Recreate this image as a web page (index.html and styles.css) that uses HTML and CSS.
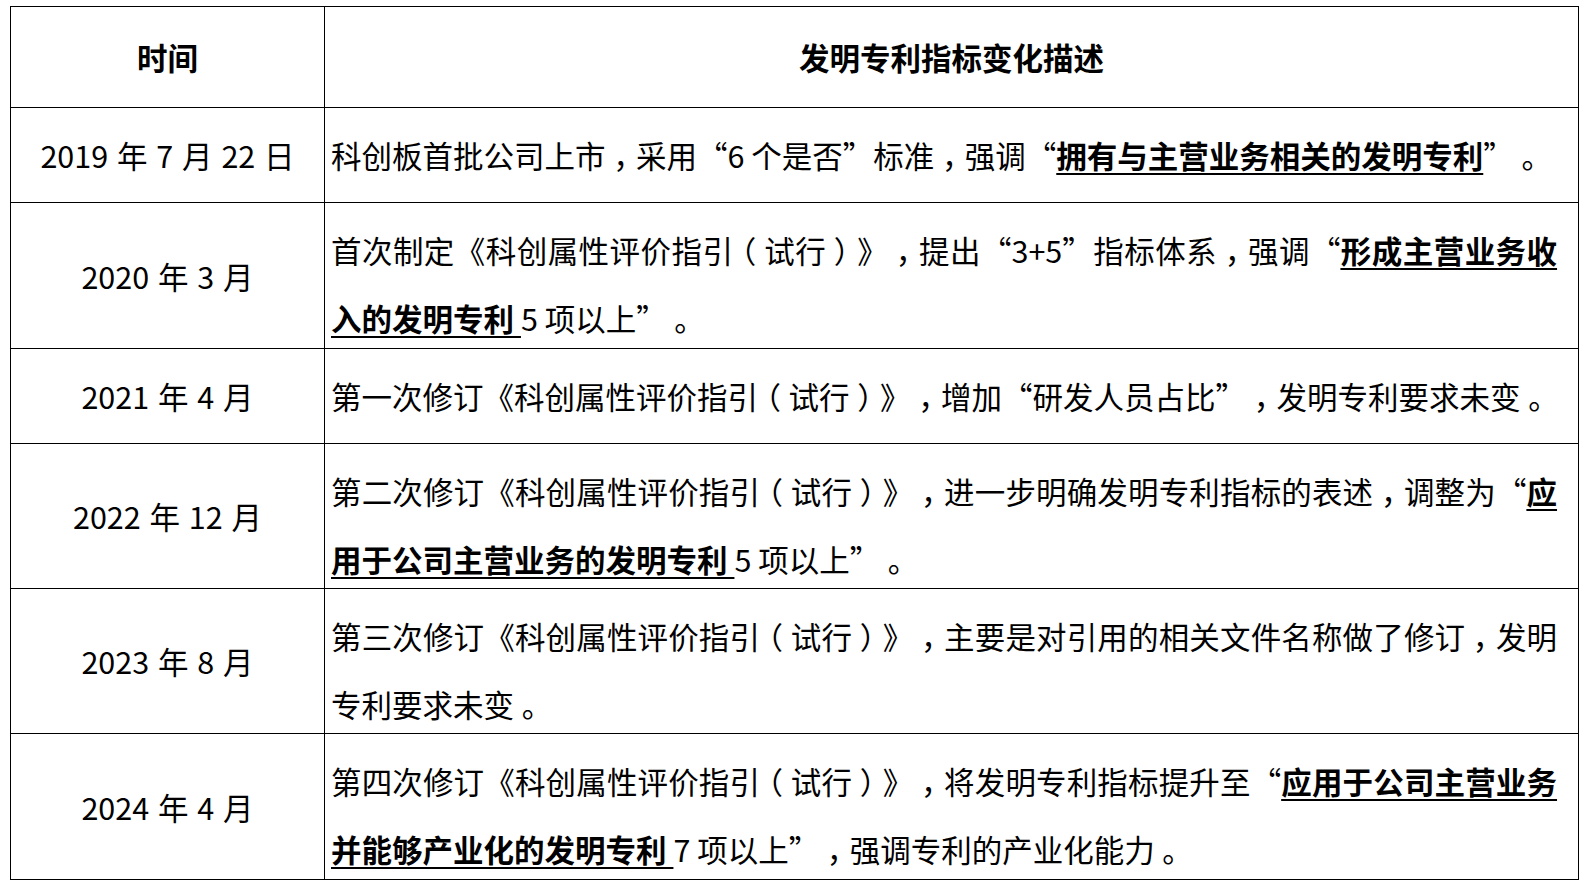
FILE: index.html
```html
<!DOCTYPE html>
<html lang="zh-CN">
<head>
<meta charset="utf-8">
<title>发明专利指标变化</title>
<link rel="stylesheet" href="styles.css">
</head>
<body>
<div class="table">
  <div class="cell head">时间</div>
  <div class="cell head">发明专利指标变化描述</div>

  <div class="cell date">2019 年 7 月 22 日</div>
  <div class="cell desc"><p>科创板首批公司上市<span class="pc">，</span>采用<span class="q">“</span>6 个是否<span class="q">”</span>标准<span class="pc">，</span>强调<span class="q">“</span><span class="u">拥有与主营业务相关的发明专利</span><span class="q">”</span><span class="pc">。</span></p></div>

  <div class="cell date">2020 年 3 月</div>
  <div class="cell desc multi"><p>首次制定《科创属性评价指引<span class="pc">（</span>试行<span class="pc">）</span>》<span class="pc">，</span>提出<span class="q">“</span>3+5<span class="q">”</span>指标体系<span class="pc">，</span>强调<span class="q">“</span><span class="u">形成主营业务收入的发明专利 </span>5 项以上<span class="q">”</span><span class="pc">。</span></p></div>

  <div class="cell date">2021 年 4 月</div>
  <div class="cell desc"><p>第一次修订《科创属性评价指引<span class="pc">（</span>试行<span class="pc">）</span>》<span class="pc">，</span>增加<span class="q">“</span>研发人员占比<span class="q">”</span><span class="pc">，</span>发明专利要求未变<span class="pc">。</span></p></div>

  <div class="cell date">2022 年 12 月</div>
  <div class="cell desc multi"><p>第二次修订《科创属性评价指引<span class="pc">（</span>试行<span class="pc">）</span>》<span class="pc">，</span>进一步明确发明专利指标的表述<span class="pc">，</span>调整为<span class="q">“</span><span class="u">应用于公司主营业务的发明专利 </span>5 项以上<span class="q">”</span><span class="pc">。</span></p></div>

  <div class="cell date">2023 年 8 月</div>
  <div class="cell desc multi"><p>第三次修订《科创属性评价指引<span class="pc">（</span>试行<span class="pc">）</span>》<span class="pc">，</span>主要是对引用的相关文件名称做了修订<span class="pc">，</span>发明专利要求未变<span class="pc">。</span></p></div>

  <div class="cell date">2024 年 4 月</div>
  <div class="cell desc multi"><p>第四次修订《科创属性评价指引<span class="pc">（</span>试行<span class="pc">）</span>》<span class="pc">，</span>将发明专利指标提升至<span class="q">“</span><span class="u">应用于公司主营业务并能够产业化的发明专利 </span>7 项以上<span class="q">”</span><span class="pc">，</span>强调专利的产业化能力<span class="pc">。</span></p></div>
</div>
</body>
</html>
```

FILE: styles.css
```css
html, body {
  margin: 0;
  background: #fff;
}

body {
  padding: 6px 0 0 10px;
  font-family: "Noto Sans CJK SC", "Noto Sans", sans-serif;
  color: #000;
  text-spacing-trim: space-all;
}

.table {
  display: grid;
  grid-template-columns: 313px 1253px;
  grid-template-rows: 100px 94px 145px 94px 144px 144px 145px;
  gap: 1px;
  padding: 1px;
  background: #000;
  width: max-content;
}

.cell {
  background: #fff;
  display: flex;
  align-items: center;
  font-size: 30.5px;
  overflow: visible;
}

.head {
  justify-content: center;
  font-weight: 700;
}

.date {
  justify-content: center;
  word-spacing: 2px;
}

.desc {
  padding: 0 21px 0 6px;
  line-height: 68px;
}

.desc p {
  margin: 0;
  flex: 1;
  text-align: justify;
}

.desc.multi {
  align-items: flex-start;
  padding-top: 13px;
}

.q {
  font-feature-settings: "fwid" 1;
}

.pc {
  font-feature-settings: "halt" 1;
  padding: 0 0.25em;
}

.u {
  font-weight: 700;
  text-decoration: underline;
  text-decoration-thickness: 2px;
  text-underline-offset: 5px;
}
```
